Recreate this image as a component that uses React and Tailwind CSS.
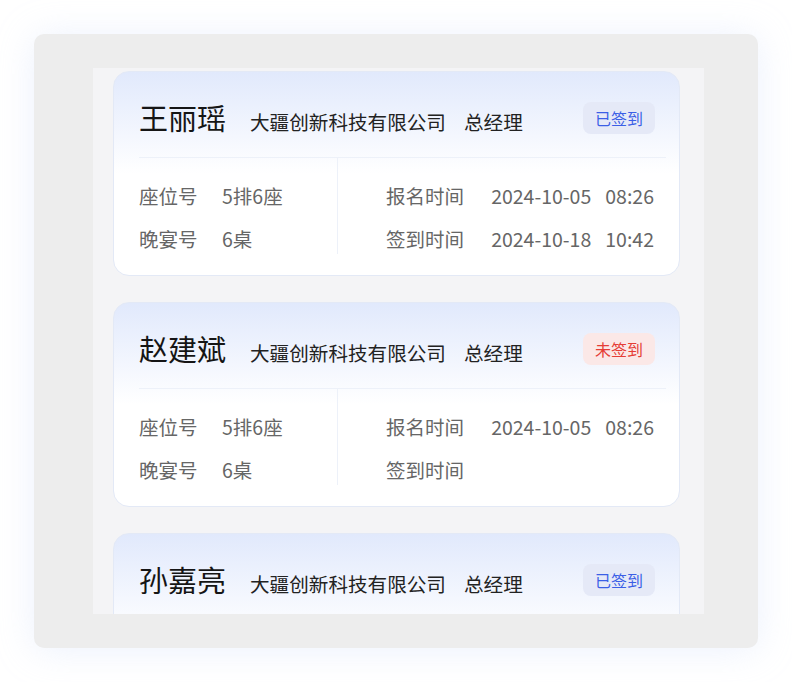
import React from "react";

const guests = [
  { name: "王丽瑶", company: "大疆创新科技有限公司", title: "总经理", signed: true, seat: "5排6座", table: "6桌", regDate: "2024-10-05", regTime: "08:26", signDate: "2024-10-18", signTime: "10:42" },
  { name: "赵建斌", company: "大疆创新科技有限公司", title: "总经理", signed: false, seat: "5排6座", table: "6桌", regDate: "2024-10-05", regTime: "08:26" },
  { name: "孙嘉亮", company: "大疆创新科技有限公司", title: "总经理", signed: true, seat: "5排6座", table: "6桌", regDate: "2024-10-05", regTime: "08:26", signDate: "2024-10-18", signTime: "10:42" },
];

function Stamp({ date, time }) {
  if (!date) return null;
  return (
    <span className="text-[#666]">
      {date}
      <span className="ml-[14px]">{time}</span>
    </span>
  );
}

function GuestCard({ g }) {
  return (
    <div className="shrink-0 h-[205px] rounded-2xl border border-[#e3e9f6] bg-linear-to-b from-[#e1e9fc] via-white via-50% to-white pl-[25px] pr-[13px]">
      {/* header */}
      <div className="h-[86px] pt-[6px] flex items-center border-b border-[#edf1f9]">
        <div className="flex items-baseline">
          <span className="text-[29px] text-[#151515]">{g.name}</span>
          <span className="ml-[24px] text-[19.6px] text-[#222]">{g.company}</span>
          <span className="ml-[18px] text-[19.6px] text-[#222]">{g.title}</span>
        </div>
        <span
          className={`ml-auto mr-[11px] w-[72px] h-8 rounded-lg flex items-center justify-center text-[16px] ${
            g.signed ? "bg-[#e5e9f7] text-[#3b5fe6]" : "bg-[#fbe8e7] text-[#e53d36]"
          }`}
        >
          {g.signed ? "已签到" : "未签到"}
        </span>
      </div>

      {/* details */}
      <div className="flex text-[19.5px] leading-[24px] text-[#666]">
        <div className="w-[199px] pt-[26px] pb-[3px] flex flex-col gap-[19px] border-r border-[#edf1f9]">
          <div className="flex">
            <span className="w-[83px]">座位号</span>
            <span>{g.seat}</span>
          </div>
          <div className="flex">
            <span className="w-[83px]">晚宴号</span>
            <span>{g.table}</span>
          </div>
        </div>
        <div className="flex-1 pl-[48px] pr-[12px] pt-[26px] flex flex-col gap-[19px]">
          <div className="flex justify-between">
            <span>报名时间</span>
            <Stamp date={g.regDate} time={g.regTime} />
          </div>
          <div className="flex justify-between">
            <span>签到时间</span>
            <Stamp date={g.signDate} time={g.signTime} />
          </div>
        </div>
      </div>
    </div>
  );
}

export default function App() {
  return (
    <div
      className="w-[792px] h-[682px] bg-white pt-[34px] pl-[34px]"
      style={{ fontFamily: '"Noto Sans CJK SC", "Noto Sans", sans-serif' }}
    >
      <div className="w-[724px] h-[614px] rounded-[10px] bg-[#ededed] shadow-[0_2px_36px_rgba(200,216,250,0.35)] pt-[34px] pl-[59px]">
        <div className="w-[611px] h-[546px] bg-[#f4f4f6] overflow-hidden pt-[3px] pl-5 pr-6 flex flex-col gap-[26px]">
          {guests.map((g) => (
            <GuestCard key={g.name} g={g} />
          ))}
        </div>
      </div>
    </div>
  );
}
